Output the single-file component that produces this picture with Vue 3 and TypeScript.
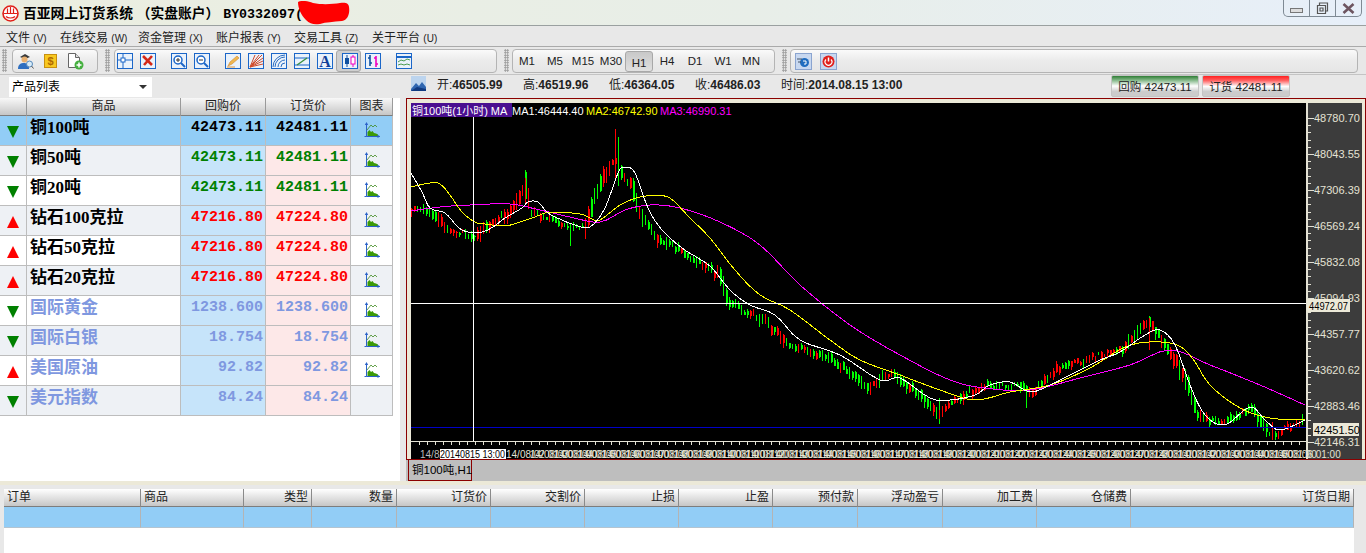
<template>
  <div class="app">
    <div class="titlebar">
      <svg class="logo" width="17" height="17" viewBox="0 0 17 17">
        <circle cx="8.5" cy="8.5" r="7.5" fill="#fff" stroke="#e02018" stroke-width="1.6" />
        <path d="M1.5 8.5h14M5.5 3.5v5M8.5 2v6.5M11.5 3.5v5M4 11.5c2 2 7 2 9 0" fill="none" stroke="#e02018" stroke-width="1.2" />
      </svg>
      <span class="title-text">百亚网上订货系统 （实盘账户） <span class="acct">BY0332097(</span></span>
      <svg class="redact" width="52" height="24" viewBox="0 0 52 24">
        <path d="M0 1C4-1 10 0 15 2 25 4 35 3 42 2 47 1 51 2 51 6 52 12 50 19 44 20 35 21 28 21 22 23 16 24 12 23 8 19 3 14 0 7 0 1Z" fill="#ff0000" />
      </svg>
      <div class="winbtns">
        <span class="winbtn"><i class="w-min"></i></span>
        <span class="winbtn">
          <svg width="13" height="13" viewBox="0 0 13 13"><path d="M3.5 3V1h8v8h-2M1.5 3.5h8v8h-8zM4 6h3v3H4z" fill="none" stroke="#555" stroke-width="1.2" /></svg>
        </span>
        <span class="winbtn">
          <svg width="13" height="11" viewBox="0 0 13 11"><path d="M1.5 1l10 9M11.5 1l-10 9" fill="none" stroke="#6d5560" stroke-width="2.6" /></svg>
        </span>
      </div>
    </div>

    <div class="menubar">
      <span v-for="m in menus" :key="m.label" class="menu-item">{{ m.label }} <small>({{ m.key }})</small></span>
    </div>

    <div class="toolbar">
      <i class="grip"></i>
      <div class="tgroup g1">
        <svg width="17" height="18" viewBox="0 0 17 18">
          <path d="M3 5l5-3 5 3-5 2z" fill="#3a3a3a" />
          <circle cx="7.5" cy="7.5" r="3" fill="#e8b070" />
          <path d="M1 17c0-5 3-6 6-6s5 2 5 6z" fill="#2f6fc0" />
          <circle cx="12.5" cy="12" r="3" fill="#d8ecf8" stroke="#5588bb" />
          <path d="M14.5 14l2 2.5" stroke="#555" />
        </svg>
        <svg class="ml-dollar" width="13" height="14" viewBox="0 0 13 14">
          <rect x=".5" y=".5" width="12" height="13" fill="#f8c820" stroke="#c89010" />
          <text x="6.5" y="11" text-anchor="middle" class="dollar">$</text>
        </svg>
        <svg class="ml-doc" width="17" height="17" viewBox="0 0 17 17">
          <path d="M1.5.5h7l4 4v10h-11z" fill="#fff" stroke="#666" />
          <path d="M8.5.5v4h4" fill="#ddd" stroke="#666" />
          <circle cx="12" cy="12" r="4.5" fill="#46b040" />
          <path d="M9.5 12h5M12 9.5v5" stroke="#fff" stroke-width="1.5" />
        </svg>
      </div>
      <i class="grip g2-grip"></i>
      <div class="tgroup g2">
        <svg class="tb" viewBox="0 0 16 16"><rect class="box" x=".5" y=".5" width="15" height="15" /><path d="M6 .5v15M.5 7h15" stroke="#1b66c8" fill="none" /><rect x="4" y="5" width="4" height="4" fill="#fff" stroke="#1b66c8" /></svg>
        <svg class="tb" viewBox="0 0 16 16"><rect class="box" x=".5" y=".5" width="15" height="15" /><path d="M3 3l9 9M12 3l-8 9" stroke="#d42818" stroke-width="2.6" fill="none" /></svg>
        <svg class="tb sep" viewBox="0 0 16 16"><rect class="box" x=".5" y=".5" width="15" height="15" /><circle cx="7" cy="7" r="4" fill="#fff" stroke="#1b66c8" stroke-width="1.5" /><path d="M10 10l4 4" stroke="#1b66c8" stroke-width="2" /><path d="M5 7h4M7 5v4" stroke="#333" /></svg>
        <svg class="tb" viewBox="0 0 16 16"><rect class="box" x=".5" y=".5" width="15" height="15" /><circle cx="7" cy="7" r="4" fill="#fff" stroke="#1b66c8" stroke-width="1.5" /><path d="M10 10l4 4" stroke="#1b66c8" stroke-width="2" /><path d="M5 7h4" stroke="#333" /></svg>
        <svg class="tb sep" viewBox="0 0 16 16"><rect class="box" x=".5" y=".5" width="15" height="15" /><path d="M3 13l2-4 7-6 2 2-7 6z" fill="#f0b850" stroke="#d08830" stroke-width=".6" /><path d="M2 14h8" stroke="#e09840" /></svg>
        <svg class="tb" viewBox="0 0 16 16"><rect class="box" x=".5" y=".5" width="15" height="15" /><path d="M2 14L14 2M2 14L15 5M2 14l13-6M2 14l13-3M2 14L11 2M2 14L7 2" stroke="#d04828" fill="none" /></svg>
        <svg class="tb" viewBox="0 0 16 16"><rect class="box" x=".5" y=".5" width="15" height="15" /><path d="M2 14a12 12 0 0 1 12-12M4 14a10 10 0 0 1 10-10M7 14a7 7 0 0 1 7-7M10 14a4 4 0 0 1 4-4" stroke="#2a6cc0" fill="none" /></svg>
        <svg class="tb" viewBox="0 0 16 16"><rect class="box" x=".5" y=".5" width="15" height="15" /><path d="M1 5h14M1 12h14" stroke="#1b66c8" /><path d="M3 12L13 5" stroke="#3a9040" stroke-width="1.4" /></svg>
        <svg class="tb" viewBox="0 0 16 16"><rect class="box" x=".5" y=".5" width="15" height="15" /><text x="8" y="14" text-anchor="middle" class="big-a">A</text></svg>
        <span class="tb-active">
          <svg class="tb0" viewBox="0 0 16 16"><rect class="box" x=".5" y=".5" width="15" height="15" /><path d="M5 2v12" stroke="#1050a0" /><rect x="3" y="5" width="4" height="6" fill="#1050a0" /><path d="M11 2v12" stroke="#f000c0" /><rect x="9" y="4" width="4" height="7" fill="#fff" stroke="#f000c0" /></svg>
        </span>
        <svg class="tb tb-after" viewBox="0 0 16 16"><rect class="box" x=".5" y=".5" width="15" height="15" /><path d="M5 2v11M3 5h2M5 10h2" stroke="#1050a0" stroke-width="1.6" fill="none" /><path d="M11 3v11M9 5h2M11 11h2" stroke="#f000c0" stroke-width="1.6" fill="none" /></svg>
        <svg class="tb sep" viewBox="0 0 16 16"><rect class="box" x=".5" y=".5" width="15" height="15" /><path d="M1 4h14" stroke="#1b66c8" stroke-width="2" /><path d="M2 9l3-2 3 1 3-2 3 1M2 12l3-1 3 1 3-1 3 1" stroke="#4a9a50" fill="none" /></svg>
      </div>
      <i class="grip g3-grip"></i>
      <div class="tgroup g3">
        <span v-for="t in timeframes" :key="t" class="tf" :class="{ active: t === 'H1' }">{{ t }}</span>
      </div>
      <i class="grip g4-grip"></i>
      <div class="tgroup g4">
        <svg class="sq" viewBox="0 0 17 17"><rect x=".5" y=".5" width="16" height="16" fill="#c8d8f0" stroke="#8aa4d0" /><circle cx="9.5" cy="9.5" r="4.5" fill="#1f6cc0" /><path d="M2 6h5M3 9h3" stroke="#456" /><path d="M8 8h3v3H9" stroke="#fff" fill="none" /></svg>
        <svg class="sq sq2" viewBox="0 0 17 17"><rect x=".5" y=".5" width="16" height="16" fill="#c8d8f0" stroke="#8aa4d0" /><circle cx="8.5" cy="8.5" r="6" fill="#e0201c" /><path d="M8.5 4.5v4" stroke="#fff" stroke-width="1.5" /><path d="M6 6.5a3.4 3.4 0 1 0 5 0" stroke="#fff" fill="none" stroke-width="1.2" /></svg>
      </div>
    </div>

    <div class="middle">
      <div class="left">
        <div class="combo-row">
          <div class="combo">产品列表<i class="caret"></i></div>
        </div>
        <div class="quotes">
          <div class="qrow qhead">
            <span></span><span>商品</span><span>回购价</span><span>订货价</span><span>图表</span>
          </div>
          <div
            v-for="(q, i) in quotes"
            :key="q.name"
            class="qrow"
            :class="[i === 0 ? 'selected' : i % 2 ? 'alt' : '', q.kind]"
          >
            <span class="arrow-cell"><i :class="q.up ? 'up' : 'down'"></i></span>
            <span class="name">{{ q.name }}</span>
            <span class="price buy">{{ q.buy }}</span>
            <span class="price sell">{{ q.sell }}</span>
            <span class="chart-cell">
              <svg v-if="i < 9" width="16" height="16" viewBox="0 0 16 16">
                <path d="M3.5 14V10l2-2 1.5 2 1.5-1 1.5 2 2 .5 2 1V14z" fill="#3c9a08" />
                <path d="M3 8l4-5 2 2 2-2 2 2" stroke="#3f8a20" fill="none" stroke-width=".8" />
                <path d="M2.5 1v13.5H16M.5 14.5h2" stroke="#2b62c8" fill="none" />
                <path d="M.8 3l1.7-3L4.2 3zM13.5 12.5l2.5 2-2.5 1.5z" fill="#2b62c8" />
              </svg>
            </span>
          </div>
        </div>
      </div>

      <div class="right">
        <div class="info-row">
          <svg class="pic" width="15" height="15" viewBox="0 0 15 15">
            <rect width="15" height="15" fill="#bcd4ee" />
            <path d="M0 13l5-6 3 3 3-4 4 5v4H0z" fill="#2f66b0" />
            <path d="M0 15l6-4 9 2v2z" fill="#103a80" />
          </svg>
          <span class="ohlc o1">开:<b>46505.99</b></span>
          <span class="ohlc">高:<b>46519.96</b></span>
          <span class="ohlc">低:<b>46364.05</b></span>
          <span class="ohlc">收:<b>46486.03</b></span>
          <span class="ohlc">时间:<b>2014.08.15 13:00</b></span>
          <span class="quote-btn green">回购 42473.11</span>
          <span class="quote-btn red">订货 42481.11</span>
        </div>
        <div class="chart-frame">
          <svg class="chart" width="951" height="356" viewBox="411 103 951 356">
            <rect x="411" y="103" width="895" height="356" fill="#000" />
            <rect x="1308" y="103" width="54" height="356" fill="#3c3c3c" />
            <path :d="greenPath" stroke="#00ff00" fill="none" shape-rendering="crispEdges" />
            <path :d="redPath" stroke="#ff0000" fill="none" shape-rendering="crispEdges" />
            <polyline :points="ma3" class="ma" stroke="#ff00ff" />
            <polyline :points="ma2" class="ma" stroke="#ffff00" />
            <polyline :points="ma1" class="ma" stroke="#ffffff" />
            <path d="M411 427.5H1306" stroke="#0000c8" shape-rendering="crispEdges" />
            <path d="M473.5 103V441M411 303.5H1306" stroke="#fff" shape-rendering="crispEdges" />
            <path d="M1306.5 103V459M1307.5 103V459M411 441.5H1306" stroke="#e4e2d4" shape-rendering="crispEdges" />
            <path :d="axisTicks" stroke="#e4e2d4" fill="none" shape-rendering="crispEdges" />
            <text v-for="l in priceLabels" :key="l.t" x="1314" :y="l.y + 4" class="axis-text">{{ l.t }}</text>
            <rect x="1307" y="299" width="43" height="13" fill="#ece9d8" />
            <text x="1309" y="309.5" class="tag-text" textLength="39" lengthAdjust="spacingAndGlyphs">44972.07</text>
            <rect x="1313" y="423" width="46" height="13" fill="#ece9d8" />
            <text x="1314" y="433.5" class="axis-text dark">42451.50</text>
            <text v-for="l in timeLabels" :key="l.x" :x="l.x" y="458" class="time-text">{{ l.t }}</text>
            <text x="420" y="458" class="time-text grey">14/8/</text>
            <rect x="440" y="449" width="66" height="10" fill="#fff" />
            <text x="440" y="458" class="time-text dark" textLength="65" lengthAdjust="spacingAndGlyphs">20140815 13:00</text>
            <rect x="411" y="103" width="101" height="14" fill="#4a0f90" />
            <text x="412" y="114.5" class="legend" fill="#fff">铜100吨(1小时) MA</text>
            <text x="512" y="114.5" class="legend" fill="#fff">MA1:46444.40</text>
            <text x="586" y="114.5" class="legend" fill="#ffff00">MA2:46742.90</text>
            <text x="660" y="114.5" class="legend" fill="#ff00ff">MA3:46990.31</text>
          </svg>
        </div>
        <div class="tabbar">
          <span class="tab">铜100吨,H1</span>
        </div>
      </div>
    </div>

    <div class="strip"></div>

    <div class="orders">
      <div class="ogrid ohead">
        <span v-for="(c, i) in orderCols" :key="c" :class="{ lft: i < 2 }">{{ c }}</span>
      </div>
      <div class="ogrid obody">
        <span v-for="c in orderCols" :key="c"></span>
      </div>
    </div>
  </div>
</template>

<script setup lang="ts">
type Pt = [number, number]

interface Quote {
  name: string
  buy: string
  sell: string
  up: boolean
  kind: string
}

const menus = [
  { label: '文件', key: 'V' },
  { label: '在线交易', key: 'W' },
  { label: '资金管理', key: 'X' },
  { label: '账户报表', key: 'Y' },
  { label: '交易工具', key: 'Z' },
  { label: '关于平台', key: 'U' },
]
const timeframes = ['M1', 'M5', 'M15', 'M30', 'H1', 'H4', 'D1', 'W1', 'MN']
const orderCols = ['订单', '商品', '类型', '数量', '订货价', '交割价', '止损', '止盈', '预付款', '浮动盈亏', '加工费', '仓储费', '订货日期']

const quotes: Quote[] = [
  { name: '铜100吨', buy: '42473.11', sell: '42481.11', up: false, kind: 'live-down' },
  { name: '铜50吨', buy: '42473.11', sell: '42481.11', up: false, kind: 'live-down' },
  { name: '铜20吨', buy: '42473.11', sell: '42481.11', up: false, kind: 'live-down' },
  { name: '钻石100克拉', buy: '47216.80', sell: '47224.80', up: true, kind: 'live-up' },
  { name: '钻石50克拉', buy: '47216.80', sell: '47224.80', up: true, kind: 'live-up' },
  { name: '钻石20克拉', buy: '47216.80', sell: '47224.80', up: true, kind: 'live-up' },
  { name: '国际黄金', buy: '1238.600', sell: '1238.600', up: false, kind: 'idle' },
  { name: '国际白银', buy: '18.754', sell: '18.754', up: false, kind: 'idle' },
  { name: '美国原油', buy: '92.82', sell: '92.82', up: true, kind: 'idle' },
  { name: '美元指数', buy: '84.24', sell: '84.24', up: false, kind: 'idle' },
]

// traced from the chart, in page pixels
const pricePath: Pt[] = [
  [411, 210], [430, 212], [450, 233], [465, 232], [476, 238], [490, 222], [505, 215], [515, 205], [525, 184],
  [530, 212], [545, 218], [565, 226], [585, 226], [595, 195], [605, 172], [612, 160], [618, 158], [622, 178],
  [632, 186], [638, 210], [645, 222], [658, 238], [678, 250], [698, 263], [718, 274], [730, 305], [760, 318],
  [790, 345], [830, 358], [870, 388], [890, 372], [920, 395], [938, 413], [960, 398], [985, 385], [1020, 385],
  [1030, 395], [1060, 366], [1090, 358], [1120, 350], [1148, 322], [1165, 345], [1185, 378], [1197, 415],
  [1220, 425], [1250, 408], [1270, 435], [1285, 430], [1305, 420],
]
const white: Pt[] = [
  [411, 173], [422, 192], [430, 208], [445, 213], [458, 227], [468, 232], [482, 232], [493, 227], [505, 218],
  [522, 208], [528, 202], [538, 202], [548, 213], [562, 220], [575, 225], [590, 227], [605, 208], [618, 173],
  [625, 167], [635, 173], [648, 208], [662, 230], [682, 248], [698, 258], [712, 268], [730, 290], [750, 305],
  [775, 315], [800, 340], [840, 355], [880, 380], [900, 378], [930, 398], [950, 400], [975, 395], [990, 385],
  [1010, 382], [1030, 392], [1050, 385], [1070, 375], [1100, 360], [1120, 352], [1145, 335], [1160, 330],
  [1175, 345], [1190, 385], [1205, 415], [1225, 425], [1250, 407], [1265, 420], [1280, 430], [1305, 420],
]
const yellow: Pt[] = [
  [411, 187], [430, 183], [440, 184], [450, 195], [462, 212], [475, 222], [485, 224], [505, 226], [520, 222],
  [535, 217], [550, 212], [580, 214], [590, 218], [600, 220], [620, 205], [640, 197], [655, 196], [670, 198],
  [690, 218], [710, 238], [735, 270], [760, 295], [790, 310], [830, 340], [860, 360], [900, 375], [940, 390],
  [975, 400], [1010, 392], [1050, 385], [1090, 368], [1130, 345], [1170, 343], [1190, 355], [1210, 385],
  [1240, 408], [1270, 418], [1305, 420],
]
const magenta: Pt[] = [
  [411, 211], [440, 207], [470, 205], [510, 204], [540, 210], [570, 217], [600, 222], [625, 210], [650, 205],
  [680, 208], [720, 222], [760, 245], [800, 285], [850, 325], [900, 355], [950, 380], [985, 388], [1030, 390],
  [1080, 378], [1130, 365], [1170, 350], [1210, 365], [1260, 385], [1305, 405],
]

// catmull-rom so the averages don't look like straight segments
function smooth(pts: Pt[]): string {
  const out: string[] = []
  for (let i = 0; i < pts.length - 1; i++) {
    const p0 = pts[Math.max(i - 1, 0)]
    const p1 = pts[i]
    const p2 = pts[i + 1]
    const p3 = pts[Math.min(i + 2, pts.length - 1)]
    for (let s = 0; s < 4; s++) {
      const t = s / 4
      const f = (a: number, b: number, c: number, d: number) =>
        0.5 * (2 * b + (c - a) * t + (2 * a - 5 * b + 4 * c - d) * t * t + (3 * b - a - 3 * c + d) * t * t * t)
      out.push(`${f(p0[0], p1[0], p2[0], p3[0]).toFixed(1)},${f(p0[1], p1[1], p2[1], p3[1]).toFixed(1)}`)
    }
  }
  out.push(pts[pts.length - 1].join(','))
  return out.join(' ')
}

function yAt(x: number): number {
  for (let i = 0; i < pricePath.length - 1; i++) {
    const [x0, y0] = pricePath[i]
    const [x1, y1] = pricePath[i + 1]
    if (x >= x0 && x <= x1) return y0 + ((y1 - y0) * (x - x0)) / (x1 - x0)
  }
  return pricePath[pricePath.length - 1][1]
}

let seed = 20140815
function rnd(): number {
  seed = (seed * 1664525 + 1013904223) % 4294967296
  return seed / 4294967296
}

// the few long wicks that stand out on the reference
const spikes: Record<number, [number, number, boolean]> = {
  615: [129, 180, true],
  618: [137, 186, false],
  525: [178, 205, true],
  570: [226, 246, false],
  939: [398, 424, false],
  1026: [385, 408, false],
  1149: [318, 350, true],
  1272: [422, 440, true],
}

let reds = ''
let greens = ''
for (let x = 411; x < 1305; x += 3) {
  const y = yAt(x)
  const slope = yAt(x + 3) - y
  const rising = rnd() < 0.74 ? slope < 0 : slope > 0
  const len = 1 + Math.abs(slope) * 1.5 + rnd() * 4
  const top = Math.round(y - len / 2 + (rnd() - 0.5) * 5)
  const bottom = Math.round(top + len)
  const wickTop = top - Math.round(rnd() * 3)
  const wickBottom = bottom + Math.round(rnd() * rnd() * 7)
  const wide = rnd() < 0.6
  const seg = `M${x}.5 ${wickTop}V${wickBottom}` + (wide ? `M${x + 1}.5 ${top}V${bottom}` : '')
  if (rising) reds += seg
  else greens += seg
}
for (const key of Object.keys(spikes)) {
  const [top, bottom, isRed] = spikes[Number(key)]
  const seg = `M${key}.5 ${top}V${bottom}`
  if (isRed) reds += seg
  else greens += seg
}
const redPath = reds
const greenPath = greens

const ma1 = smooth(white)
const ma2 = smooth(yellow)
const ma3 = smooth(magenta)

const prices = ['48780.70', '48043.55', '47306.39', '46569.24', '45832.08', '45094.93', '44357.77', '43620.62', '42883.46', '42146.31']
const priceLabels = prices.map((t, i) => ({ t, y: 118 + i * 36 }))

let ticks = ''
for (let i = 0; i <= 45; i++) {
  const y = Math.round(118 + i * 7.2)
  ticks += `M1308 ${y}.5h${i % 5 === 0 ? 6 : 3}`
}
for (let x = 419; x < 1306; x += 8) ticks += `M${x}.5 442v3`
const axisTicks = ticks

const timeLabels: { x: number; t: string }[] = []
for (let x = 506, d = 1; x < 1282; x += 24, d++) {
  timeLabels.push({ x, t: `14/08/${String((d % 28) + 1).padStart(2, '0')} 01:00` })
}
</script>

<style>
html,
body {
  margin: 0;
  background: #e8e8e8;
}
</style>

<style scoped>
.app {
  width: 1366px;
  height: 553px;
  overflow: hidden;
  display: flex;
  flex-direction: column;
  background: #e8e8e8;
  font-family: "Liberation Sans", "Noto Sans CJK SC", sans-serif;
  color: #000;
}

/* title */
.titlebar {
  position: relative;
  height: 26px;
  box-sizing: border-box;
  flex: none;
  display: flex;
  align-items: center;
  border-bottom: 1px solid #9aa0a0;
  background: linear-gradient(90deg, #ebeee0 0%, #e8eee8 55%, #e7eff9 100%);
}
.logo {
  margin: 1px 0 0 2px;
  flex: none;
}
.title-text {
  margin: -2px 0 0 4px;
  font-size: 13.75px;
  font-weight: 700;
  white-space: pre;
}
.acct {
  font-family: "Liberation Mono", monospace;
  font-size: 13.3px;
}
.redact {
  position: absolute;
  left: 298px;
  top: 1px;
}
.winbtns {
  position: absolute;
  right: 4px;
  top: 0;
  height: 16px;
  display: flex;
  border: 1px solid #7f8a94;
  border-top: none;
  border-radius: 0 0 5px 5px;
}
.winbtn {
  width: 25px;
  display: flex;
  align-items: center;
  justify-content: center;
  border-left: 1px solid #7f8a94;
}
.winbtn:first-child {
  border-left: none;
}
.w-min {
  display: block;
  width: 11px;
  height: 3px;
  margin-top: 5px;
  background: #ddd;
  border: 1px solid #777;
}

/* menu */
.menubar {
  height: 20px;
  flex: none;
  display: flex;
  align-items: center;
  padding-left: 6px;
  font-size: 12px;
  color: #222;
}
.menu-item {
  width: 78px;
  flex: none;
  white-space: pre;
}
.menu-item:first-child {
  width: 54px;
}
.menu-item small {
  font-size: 10px;
}

/* toolbar */
.toolbar {
  height: 29px;
  flex: none;
  box-sizing: border-box;
  display: flex;
  padding: 2px 0 0 2px;
  border-top: 1px solid #aaa;
  border-bottom: 1px solid #c4c4c4;
}
.grip {
  display: block;
  width: 5px;
  height: 23px;
  flex: none;
  background-image: radial-gradient(#9a9a9a 0.9px, transparent 1px);
  background-size: 2.5px 2.5px;
}
.tgroup {
  height: 24px;
  box-sizing: border-box;
  flex: none;
  display: flex;
  align-items: center;
  border: 1px solid #b4b4b4;
  border-radius: 4px;
  background: linear-gradient(#fafafa, #ececec 45%, #e6e6e6);
}
.g1 {
  width: 86px;
  margin-left: 5px;
  padding-left: 4px;
}
.ml-dollar {
  margin-left: 10px;
}
.ml-doc {
  margin-left: 10px;
}
.g2-grip {
  margin-left: 7px;
}
.g2 {
  width: 383px;
  margin-left: 4px;
  padding-left: 2px;
}
.tb {
  width: 16px;
  height: 16px;
  flex: none;
  margin-left: 7px;
}
.tb:first-child {
  margin-left: 0;
}
.tb.sep {
  margin-left: 15px;
}
.tb.tb-after {
  margin-left: 4px;
}
.tb0 {
  width: 16px;
  height: 16px;
  display: block;
}
.tb-active {
  margin-left: 3px;
  padding: 2px 2px 2px 5px;
  background: #cfcfcf;
  border: 1px solid #a8a8a8;
  border-radius: 3px;
}
.box {
  fill: #eaf2fb;
  stroke: #1b66c8;
}
.dollar {
  font-family: "Liberation Sans", sans-serif;
  font-size: 11px;
  font-weight: 700;
  fill: #b06a00;
}
.big-a {
  font-family: "Liberation Serif", serif;
  font-size: 16px;
  font-weight: 700;
  fill: #123f98;
}
.g3-grip {
  margin-left: 7px;
}
.g3 {
  width: 263px;
  margin-left: 3px;
}
.tf {
  width: 28px;
  text-align: center;
  font-size: 11.5px;
  flex: none;
  color: #222;
}
.tf.active {
  height: 21px;
  line-height: 23px;
  box-sizing: border-box;
  background: linear-gradient(#c8c8c8, #e0e0e0);
  border: 1px solid #a8a8a8;
  border-radius: 3px;
}
.g4-grip {
  margin-left: 7px;
}
.g4 {
  width: 568px;
  margin-left: 3px;
  padding-left: 4px;
}
.sq {
  width: 17px;
  height: 17px;
  flex: none;
}
.sq2 {
  margin-left: 8px;
}

/* middle */
.middle {
  height: 406px;
  flex: none;
  display: flex;
}
.left {
  width: 400px;
  flex: none;
  display: flex;
  flex-direction: column;
}
.combo-row {
  height: 23px;
  flex: none;
  padding: 2px 0 0 9px;
  box-sizing: border-box;
}
.combo {
  position: relative;
  width: 143px;
  height: 20px;
  box-sizing: border-box;
  padding-left: 3px;
  background: #fff;
  font-size: 12px;
  line-height: 20px;
}
.caret {
  position: absolute;
  right: 5px;
  top: 8px;
  border: 4px solid transparent;
  border-top: 4px solid #333;
}
.quotes {
  flex: 1;
  background: #fff;
}
.qrow {
  display: grid;
  grid-template-columns: 27px 154px 85px 85px 42px;
  width: 393px;
  height: 30px;
}
.qrow > span {
  box-sizing: border-box;
  border-right: 1px solid #bdbdbd;
  border-bottom: 1px solid #bdbdbd;
}
.qhead {
  height: 18px;
  font-size: 12px;
  line-height: 17px;
  text-align: center;
  color: #222;
}
.qhead > span {
  background: linear-gradient(#f8f8f8, #c6c6c6);
  border-right: 1px solid #9a9a9a;
  border-bottom: 2px solid #7d7d7d;
}
.alt .arrow-cell,
.alt .name,
.alt .chart-cell {
  background: #eef1f5;
}
.arrow-cell {
  display: flex;
  justify-content: center;
  padding-top: 10px;
}
.arrow-cell i {
  display: block;
  width: 0;
  height: 0;
  border-left: 6px solid transparent;
  border-right: 6px solid transparent;
}
.arrow-cell .down {
  border-top: 12px solid #008000;
}
.arrow-cell .up {
  border-bottom: 12px solid #ff0000;
}
.name {
  padding: 0 0 0 3px;
  font-family: "Liberation Serif", "Noto Sans CJK SC", serif;
  font-size: 17px;
  font-weight: 700;
  line-height: 24px;
  white-space: nowrap;
}
.price {
  padding-right: 2px;
  text-align: right;
  font-family: "Liberation Mono", "Noto Sans CJK SC", monospace;
  font-size: 15px;
  font-weight: 700;
  line-height: 24px;
}
.buy {
  background: #c6e4fa;
}
.sell {
  background: #fde8e8;
}
.live-down .price {
  color: #008000;
}
.live-up .price {
  color: #ff0000;
}
.idle .name,
.idle .price {
  color: #7f98e0;
}
.selected > span {
  background: #92cdf6;
}
.selected .price {
  color: #000;
}
.chart-cell {
  display: flex;
  justify-content: center;
  padding-top: 6px;
}

/* right side */
.right {
  flex: 1;
  min-width: 0;
  display: flex;
  flex-direction: column;
  padding-left: 6px;
}
.info-row {
  height: 23px;
  flex: none;
  display: flex;
  box-sizing: border-box;
  align-items: center;
  padding: 0 0 6px 5px;
  position: relative;
  font-size: 12px;
  color: #222;
}
.pic {
  flex: none;
}
.ohlc {
  width: 86px;
  flex: none;
  white-space: nowrap;
}
.ohlc.o1 {
  margin-left: 11px;
}
.ohlc b {
  font-weight: 700;
}
.quote-btn {
  position: absolute;
  top: 0;
  width: 88px;
  height: 22px;
  box-sizing: border-box;
  text-align: center;
  font-size: 11.5px;
  line-height: 22px;
  border: 1px solid #c4c4c4;
  border-radius: 2px;
}
.quote-btn.green {
  left: 705px;
  background: linear-gradient(#2f7d36 0%, #7fb584 20%, #ffffff 50%, #cccccc 78%);
}
.quote-btn.red {
  left: 796px;
  background: linear-gradient(#ff2020 0%, #ff6060 22%, #ffffff 52%, #cccccc 78%);
}
.chart-frame {
  height: 362px;
  flex: none;
  box-sizing: border-box;
  padding: 4px 3px 1px 4px;
  background: #ece9d8;
  border: 1px solid #8b0000;
}
.chart {
  display: block;
}
.ma {
  fill: none;
  shape-rendering: crispEdges;
}
.axis-text {
  font-family: "Liberation Sans", sans-serif;
  font-size: 11px;
  fill: #e4e2d4;
}
.axis-text.dark {
  fill: #000;
}
.tag-text {
  font-family: "Liberation Sans", sans-serif;
  font-size: 11px;
  fill: #000;
}
.time-text {
  font-family: "Liberation Sans", sans-serif;
  font-size: 10px;
  fill: #e4e2d4;
}
.time-text.grey {
  fill: #bbb;
}
.time-text.dark {
  fill: #000;
}
.legend {
  font-family: "Liberation Sans", "Noto Sans CJK SC", sans-serif;
  font-size: 11px;
}
.tabbar {
  height: 21px;
  flex: none;
  background: #bebebe;
  padding-left: 2px;
}
.tab {
  display: block;
  width: 64px;
  height: 21px;
  box-sizing: border-box;
  padding-left: 3px;
  border: 1px solid #8b0000;
  border-top: none;
  font-size: 11.5px;
  line-height: 20px;
  white-space: nowrap;
}

.strip {
  height: 8px;
  flex: none;
  box-sizing: border-box;
  background: #e8e8e8;
  border-top: 4px solid #ece9d8;
}

/* orders */
.orders {
  flex: 1;
  margin: 0 12px 0 4px;
  background: #fff;
}
.ogrid {
  display: grid;
  grid-template-columns: 137px 103px 68px 85px 94px 94px 94px 94px 85px 85px 94px 94px 223px;
}
.ohead {
  height: 18px;
  font-size: 12px;
  color: #222;
}
.ohead > span {
  box-sizing: border-box;
  padding: 0 3px;
  text-align: right;
  line-height: 17px;
  background: linear-gradient(#ffffff, #c6c6c6);
  border-right: 1px solid #8a8a8a;
  border-bottom: 2px solid #7d7d7d;
}
.ohead > span.lft {
  text-align: left;
}
.obody {
  height: 21px;
}
.obody > span {
  box-sizing: border-box;
  background: #92cdf6;
  border-right: 1px solid #b4b4b4;
  border-bottom: 1px solid #b4c4d0;
}
</style>
